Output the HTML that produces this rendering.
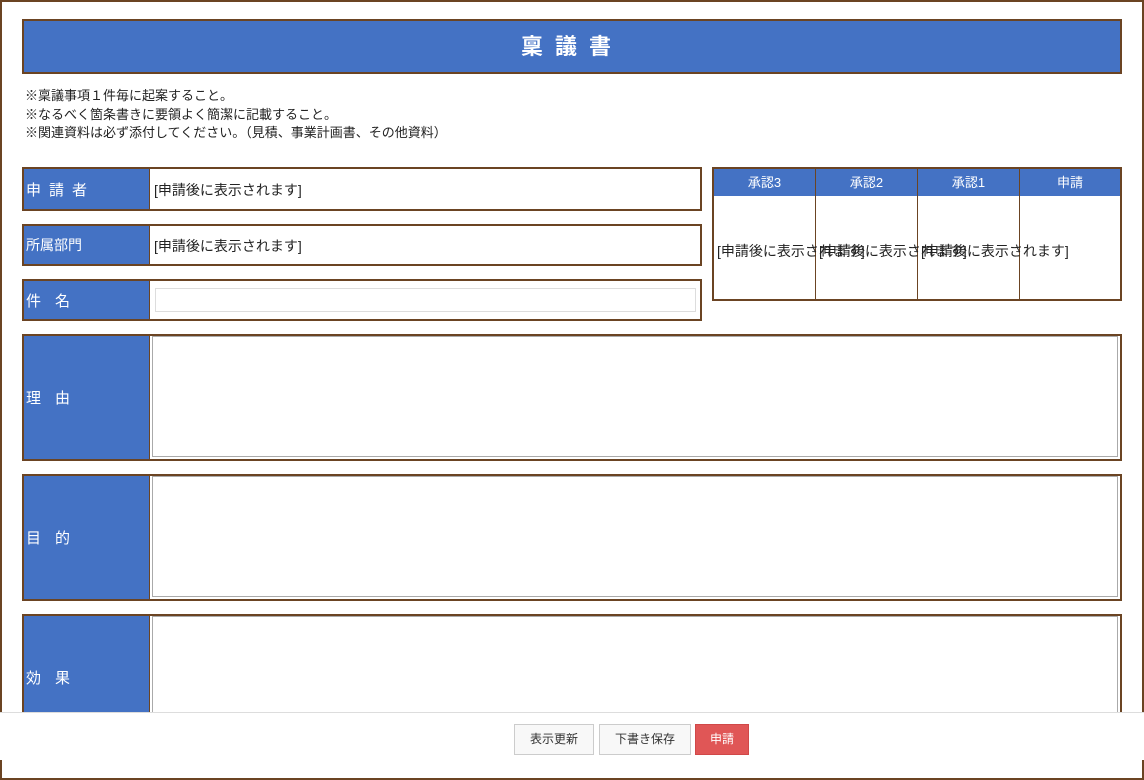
<!DOCTYPE html>
<html><head><meta charset="utf-8"><style>
*{box-sizing:border-box;margin:0;padding:0}
body{width:1144px;height:760px;overflow:hidden;background:#fff;font-family:"Liberation Sans","Noto Sans CJK JP",sans-serif;color:#222;position:relative}
.frame{position:absolute;left:0;top:0;width:1144px;height:780px;border:2px solid #6b4423}
.abs{position:absolute}
.title{left:22px;top:19px;width:1100px;height:55px;background:#4472c4;border:2px solid #6b4423;color:#fff;font-size:22px;font-weight:bold;text-align:center;line-height:51px;letter-spacing:12px}
.notes{left:25px;top:87px;font-size:13px;line-height:18.5px}
.row{border:2px solid #6b4423;background:#fff}
.lab{position:absolute;left:0;top:0;bottom:0;width:126px;background:#4472c4;color:#fff;font-size:15px;display:flex;align-items:center;padding-left:2px;border-right:1px solid #6b4423}
.val{position:absolute;left:130px;font-size:14px}
.ta{position:absolute;left:128px;top:0;right:2px;bottom:2px;border:1px solid #aaa;background:#fff}
.appr{left:712px;top:167px;width:410px;height:134px;border:2px solid #6b4423}
.appr .h{position:absolute;top:0;height:27px;background:#4472c4;color:#fff;font-size:13px;text-align:center;line-height:27px;border-right:1px solid #6b4423}
.appr .c{position:absolute;top:27px;bottom:0;border-right:1px solid #6b4423}
.appr span{position:absolute;top:72px;font-size:14px;white-space:nowrap}
.foot{left:0;top:712px;width:1144px;height:48px;background:#fff;border-top:1px solid #ddd}
.btn{position:absolute;top:11px;height:31px;border:1px solid #ccc;background:#f8f8f8;font-size:12px;color:#333;text-align:center;line-height:29px}
</style></head><body>
<div class="frame"></div>
<div class="abs title">稟議書</div>
<div class="abs notes">※稟議事項１件毎に起案すること。<br>※なるべく箇条書きに要領よく簡潔に記載すること。<br>※関連資料は必ず添付してください。（見積、事業計画書、その他資料）</div>

<div class="abs row" style="left:22px;top:167px;width:680px;height:44px"><div class="lab" style="letter-spacing:8px">申請者</div><div class="val" style="top:11px">[申請後に表示されます]</div></div>
<div class="abs row" style="left:22px;top:224px;width:680px;height:42px"><div class="lab" style="font-size:14px">所属部門</div><div class="val" style="top:10px">[申請後に表示されます]</div></div>
<div class="abs row" style="left:22px;top:279px;width:680px;height:42px"><div class="lab" style="letter-spacing:14px">件名</div><div class="abs" style="left:131px;top:7px;right:4px;height:24px;border:1px solid #ddd"></div></div>

<div class="abs appr">
<div class="h" style="left:0;width:102px">承認3</div><div class="h" style="left:102px;width:102px">承認2</div><div class="h" style="left:204px;width:102px">承認1</div><div class="h" style="left:306px;width:100px;border-right:none">申請</div>
<div class="c" style="left:0;width:102px"></div><div class="c" style="left:102px;width:102px"></div><div class="c" style="left:204px;width:102px"></div>
<span style="left:3px">[申請後に表示されます]</span><span style="left:105px">[申請後に表示されます]</span><span style="left:207px">[申請後に表示されます]</span>
</div>

<div class="abs row" style="left:22px;top:334px;width:1100px;height:127px"><div class="lab" style="letter-spacing:14px">理由</div><div class="ta"></div></div>
<div class="abs row" style="left:22px;top:474px;width:1100px;height:127px"><div class="lab" style="letter-spacing:14px">目的</div><div class="ta"></div></div>
<div class="abs row" style="left:22px;top:614px;width:1100px;height:127px"><div class="lab" style="letter-spacing:14px">効果</div><div class="ta"></div></div>

<div class="abs foot">
<div class="btn" style="left:514px;width:80px">表示更新</div>
<div class="btn" style="left:599px;width:92px">下書き保存</div>
<div class="btn" style="left:695px;width:54px;background:#e05656;border-color:#d04848;color:#fff">申請</div>
</div>
</body></html>
